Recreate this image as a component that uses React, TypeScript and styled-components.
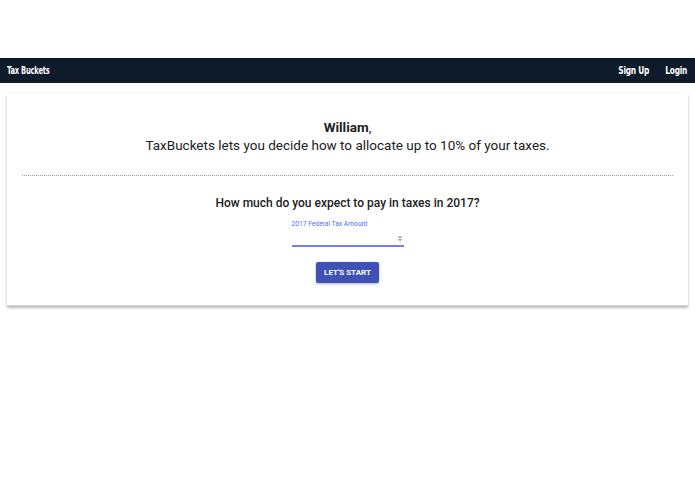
import styled, { createGlobalStyle } from "styled-components";

const GlobalStyle = createGlobalStyle`
  html, body {
    margin: 0;
    padding: 0;
    background: #ffffff;
  }
  body {
    font-family: Roboto, "Liberation Sans", Arial, sans-serif;
    color: #212121;
  }
`;

const Page = styled.div`
  min-height: 494px;
  box-sizing: border-box;
  padding: 58px 0 40px 0;
`;

const NavBar = styled.nav`
  display: flex;
  align-items: center;
  justify-content: space-between;
  height: 25px;
  padding: 0 8px 0 7px;
  background: #0f1a2b;
  color: #ffffff;
  font-family: "DejaVu Sans Condensed", "DejaVu Sans", sans-serif;
  font-stretch: condensed;
  font-weight: 700;
  font-size: 11px;
  letter-spacing: -0.3px;
`;

const Brand = styled.span`
  display: inline-block;
  transform: scaleX(0.68);
  transform-origin: left center;
`;

const NavLinks = styled.div`
  display: flex;
  gap: 17px;
`;

const NavLink = styled.a`
  display: inline-block;
  color: #ffffff;
  text-decoration: none;
  transform: scaleX(0.75);
  transform-origin: right center;
  & + & {
    margin-left: -8px;
  }
`;

const Card = styled.section`
  margin: 11px 7px 0 7px;
  padding: 24px 15px 22px 15px;
  background: #ffffff;
  border-bottom: 1px solid #d6d6d6;
  box-shadow: 0 2px 2px rgba(0, 0, 0, 0.2), 0 1px 4px rgba(0, 0, 0, 0.12);
  text-align: center;
`;

const Greeting = styled.div`
  font-size: 13.5px;
  line-height: 18px;
  color: #212121;
  b {
    font-weight: 700;
  }
`;

const Lead = styled.div`
  font-size: 13.5px;
  line-height: 18px;
  color: #212121;
`;

const Divider = styled.hr`
  margin: 21px 0 0 0;
  border: none;
  border-top: 1px dotted #9e9e9e;
`;

const Question = styled.h3`
  margin: 20px 0 0 0;
  font-size: 12px;
  line-height: 15px;
  font-weight: 500;
  color: #212121;
`;

const Field = styled.label`
  position: relative;
  display: block;
  width: 112px;
  margin: 9px auto 0 auto;
  text-align: left;
`;

const FieldLabel = styled.span`
  display: block;
  font-size: 6.7px;
  line-height: 9px;
  color: #536dfe;
`;

const Input = styled.input`
  display: block;
  box-sizing: border-box;
  width: 100%;
  height: 15px;
  margin-top: 3px;
  padding: 0;
  border: none;
  border-bottom: 2px solid #6f7dfb;
  outline: none;
  background: transparent;
  font-family: inherit;
  font-size: 9px;
`;

const Spinner = styled.svg`
  position: absolute;
  right: 2px;
  bottom: 5px;
  width: 4px;
  height: 7px;
`;

const Button = styled.button`
  display: block;
  margin: 15px auto 0 auto;
  width: 63px;
  height: 21px;
  border: none;
  border-radius: 2px;
  background: #3f51b5;
  color: #ffffff;
  font-family: Roboto, "Liberation Sans", sans-serif;
  font-size: 8px;
  font-weight: 700;
  box-shadow: 0 1px 3px rgba(0, 0, 0, 0.3);
  cursor: pointer;
`;

export default function App() {
  return (
    <Page>
      <GlobalStyle />
      <NavBar>
        <Brand>Tax Buckets</Brand>
        <NavLinks>
          <NavLink href="#">Sign Up</NavLink>
          <NavLink href="#">Login</NavLink>
        </NavLinks>
      </NavBar>
      <Card>
        <Greeting>
          <b>William</b>,
        </Greeting>
        <Lead>TaxBuckets lets you decide how to allocate up to 10% of your taxes.</Lead>
        <Divider />
        <Question>How much do you expect to pay in taxes in 2017?</Question>
        <Field>
          <FieldLabel>2017 Federal Tax Amount</FieldLabel>
          <Input type="text" />
          <Spinner viewBox="0 0 4 7">
            <path d="M0 3 L2 0.5 L4 3 Z M0 4 L2 6.5 L4 4 Z" fill="#9a9a9a" />
          </Spinner>
        </Field>
        <Button>LET'S START</Button>
      </Card>
    </Page>
  );
}
